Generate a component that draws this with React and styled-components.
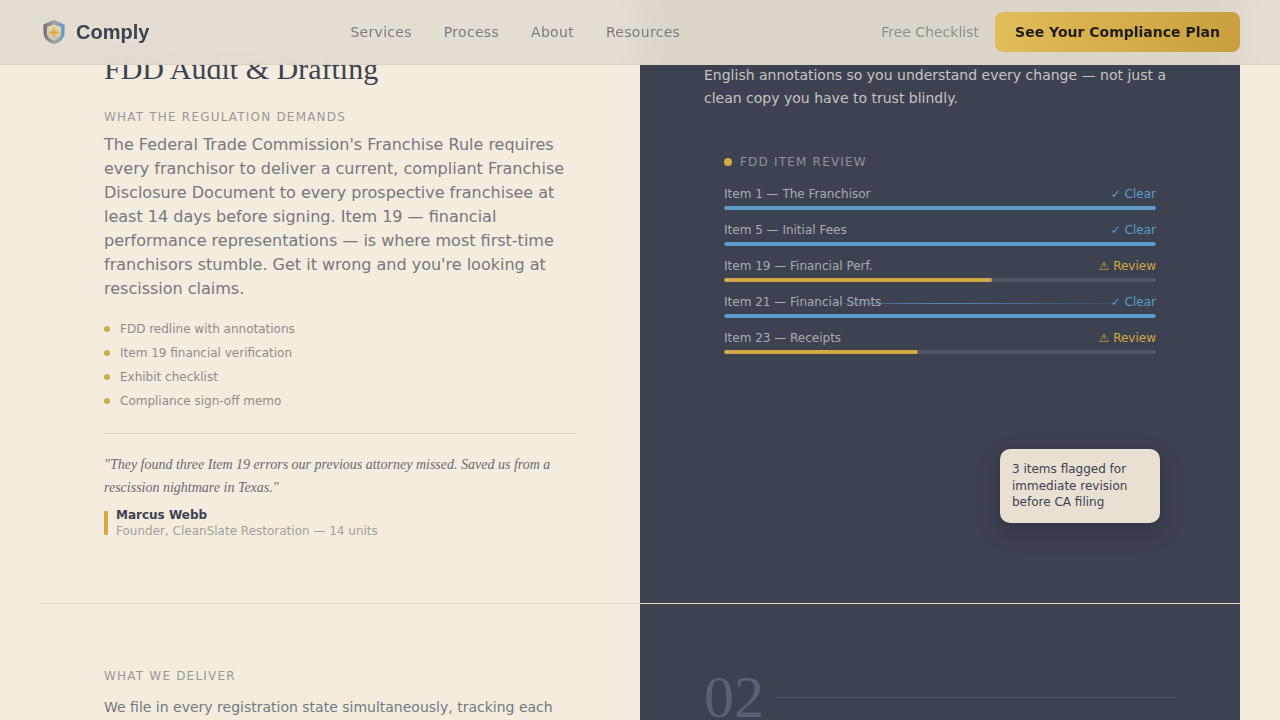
import React from "react";
import styled, { createGlobalStyle } from "styled-components";

const SANS = `"DejaVu Sans", sans-serif`;
const SERIF = `"Liberation Serif", serif`;

const GlobalStyle = createGlobalStyle`
  html, body {
    margin: 0;
    height: 720px;
    overflow: hidden;
    background: #f3ecdf;
  }
  * { box-sizing: border-box; }
`;

const Nav = styled.header`
  position: fixed;
  top: 0;
  left: 0;
  right: 0;
  z-index: 10;
  height: 65px;
  padding: 0 40px;
  display: flex;
  align-items: center;
  justify-content: space-between;
  background: rgba(227, 220, 208, 0.96);
  backdrop-filter: blur(12px);
  border-bottom: 1px solid #dad2c5;
`;

const Brand = styled.div`
  display: flex;
  align-items: center;
  gap: 8px;
  font: 700 20px "Liberation Sans", sans-serif;
  color: #3d4251;
`;

const NavLinks = styled.nav`
  display: flex;
  gap: 32px;
`;

const NavLink = styled.a`
  font: 14px ${SANS};
  letter-spacing: 0.3px;
  color: #7b7b7e;
`;

const NavActions = styled.div`
  display: flex;
  align-items: center;
  gap: 16px;
`;

const CheckLink = styled.a`
  font: 14px ${SANS};
  color: #8f8e8c;
`;

const PlanButton = styled.button`
  width: 245px;
  height: 40px;
  padding: 0;
  border: none;
  border-radius: 8px;
  background: linear-gradient(100deg, #e3bd59, #c89f3d);
  font: 700 14px ${SANS};
  color: #1f1c18;
`;

const Page = styled.main`
  width: 1200px;
  margin: 0 auto;
`;

const Row = styled.section`
  display: grid;
  grid-template-columns: 600px 600px;
  height: ${(p) => p.$height}px;
  border-bottom: ${(p) => (p.$divided ? "1px solid #e2dacc" : "none")};
`;

const TextSide = styled.div`
  padding: ${(p) => p.$top}px 64px 0;
`;

const DarkSide = styled.div`
  padding: ${(p) => p.$top}px 64px 0;
  background: #3d4251;
`;

const Title = styled.h2`
  margin: 0 0 20px;
  font: 400 30px/38px ${SERIF};
  color: #3d4251;
`;

const Eyebrow = styled.div`
  margin-bottom: 7px;
  font: 12px/18px ${SANS};
  letter-spacing: 1.2px;
  text-transform: uppercase;
  color: #9a9894;
`;

const Body = styled.p`
  margin: 0 0 16px;
  font: 16px/24px ${SANS};
  color: #77787c;
`;

const LeadIn = styled.p`
  margin: 11px 0 0;
  font: 14px/23px ${SANS};
  color: #77787c;
`;

const Bullets = styled.ul`
  margin: 0 0 20px;
  padding: 0;
  list-style: none;
`;

const Bullet = styled.li`
  display: flex;
  align-items: center;
  gap: 10px;
  height: 24px;
  font: 12px ${SANS};
  color: #8f8d89;

  &::before {
    content: "";
    width: 6px;
    height: 6px;
    border-radius: 50%;
    background: #d4a843;
  }
`;

const Testimonial = styled.figure`
  margin: 0;
  padding-top: 19px;
  border-top: 1px solid #e2dacc;
`;

const Quote = styled.blockquote`
  margin: 0 0 8px;
  font: italic 14px/23px ${SERIF};
  color: #6a6b70;
`;

const Attribution = styled.figcaption`
  display: flex;
  align-items: center;
  gap: 8px;

  &::before {
    content: "";
    width: 4px;
    height: 24px;
    border-radius: 1px;
    background: #d4a843;
  }
`;

const AuthorName = styled.div`
  font: 700 12px/16px ${SANS};
  color: #3d4251;
`;

const AuthorRole = styled.div`
  font: 12px/16px ${SANS};
  color: #a3a19c;
`;

const DarkBody = styled.p`
  margin: 0 0 43px;
  font: 14px/23px ${SANS};
  color: #c6c4c0;
`;

const Widget = styled.div`
  position: relative;
  padding: 0 20px;
`;

const WidgetHead = styled.div`
  display: flex;
  align-items: center;
  gap: 8px;
  margin-bottom: 14px;
  font: 12px/18px ${SANS};
  letter-spacing: 1.2px;
  color: #8f929a;

  &::before {
    content: "";
    width: 8px;
    height: 8px;
    border-radius: 50%;
    background: #d4a843;
  }
`;

const ItemRow = styled.div`
  height: 36px;
`;

const ItemText = styled.div`
  display: flex;
  justify-content: space-between;
  margin-bottom: 3px;
  font: 12px/18px ${SANS};
  color: #a9abb0;
`;

const Status = styled.span`
  color: ${(p) => (p.$review ? "#d4a843" : "#5b9bc9")};
`;

const Track = styled.div`
  height: 4px;
  border-radius: 2px;
  background: #4f5564;
  overflow: hidden;
`;

const Fill = styled.div`
  height: 100%;
  border-radius: 2px;
  background: ${(p) => (p.$review ? "#d4a843" : "#5b9bc9")};
`;

const ScanLine = styled.div`
  position: absolute;
  left: 20px;
  right: 20px;
  top: 150px;
  height: 1px;
  background: linear-gradient(90deg, transparent 20%, #5b9bc9 50%, transparent 95%);
  opacity: 0.8;
`;

const FloatNote = styled.div`
  position: absolute;
  top: 296px;
  right: 16px;
  width: 160px;
  height: 74px;
  padding: 12px;
  border-radius: 10px;
  background: #e8e0d3;
  box-shadow: 0 8px 24px rgba(0, 0, 0, 0.2);
  font: 12px/16.5px ${SANS};
  color: #3d4251;
`;

const StepHead = styled.div`
  display: flex;
  align-items: center;
  gap: 13px;
`;

const StepNumber = styled.div`
  font: 60px/64px ${SERIF};
  color: #596274;
`;

const StepRule = styled.div`
  flex: 1;
  height: 1px;
  background: #555c6d;
`;

const items = [
  { name: "Item 1 — The Franchisor", pct: 100 },
  { name: "Item 5 — Initial Fees", pct: 100 },
  { name: "Item 19 — Financial Perf.", pct: 62, review: true },
  { name: "Item 21 — Financial Stmts", pct: 100 },
  { name: "Item 23 — Receipts", pct: 45, review: true },
];

const ShieldLogo = () => (
  <svg width="28" height="28" viewBox="0 0 28 28" aria-hidden="true">
    <defs>
      <linearGradient id="rim" x1="0" y1="0" x2="1" y2="0">
        <stop offset="0" stopColor="#6b6f76" />
        <stop offset="0.5" stopColor="#a3a5a6" />
        <stop offset="1" stopColor="#5b9bc9" />
      </linearGradient>
      <linearGradient id="core" x1="0" y1="0" x2="0" y2="1">
        <stop offset="0" stopColor="#e8d9ad" />
        <stop offset="1" stopColor="#c9c3b8" />
      </linearGradient>
    </defs>
    <path d="M14 2 24.500 6.500v8.500c0 5.500-4.500 9.500-10.500 11C8 24.500 3.500 20.500 3.500 15V6.500z" fill="url(#rim)" />
    <path d="M14 6.500 21 9v6.200c0 3.800-3 6.300-7 7.500-4-1.200-7-3.700-7-7.500V9z" fill="url(#core)" />
    <path d="M14 8.500l1.500 4.500 4.500 1.500-4.500 1.500L14 20.500l-1.500-4.500L8 14.500l4.500-1.500z" fill="#e0ad40" />
  </svg>
);

export default function App() {
  return (
    <>
      <GlobalStyle />
      <Nav>
        <Brand>
          <ShieldLogo />
          Comply
        </Brand>
        <NavLinks>
          <NavLink>Services</NavLink>
          <NavLink>Process</NavLink>
          <NavLink>About</NavLink>
          <NavLink>Resources</NavLink>
        </NavLinks>
        <NavActions>
          <CheckLink>Free Checklist</CheckLink>
          <PlanButton>See Your Compliance Plan</PlanButton>
        </NavActions>
      </Nav>
      <Page>
        <Row $height={604} $divided>
          <TextSide $top={50}>
            <Title>FDD Audit &amp; Drafting</Title>
            <Eyebrow>What the regulation demands</Eyebrow>
            <Body>
              The Federal Trade Commission's Franchise Rule requires every
              franchisor to deliver a current, compliant Franchise Disclosure
              Document to every prospective franchisee at least 14 days before
              signing. Item 19 — financial performance representations — is
              where most first-time franchisors stumble. Get it wrong and
              you're looking at rescission claims.
            </Body>
            <Bullets>
              <Bullet>FDD redline with annotations</Bullet>
              <Bullet>Item 19 financial verification</Bullet>
              <Bullet>Exhibit checklist</Bullet>
              <Bullet>Compliance sign-off memo</Bullet>
            </Bullets>
            <Testimonial>
              <Quote>
                "They found three Item 19 errors our previous attorney missed.
                Saved us from a rescission nightmare in Texas."
              </Quote>
              <Attribution>
                <div>
                  <AuthorName>Marcus Webb</AuthorName>
                  <AuthorRole>Founder, CleanSlate Restoration — 14 units</AuthorRole>
                </div>
              </Attribution>
            </Testimonial>
          </TextSide>
          <DarkSide $top={64}>
            <DarkBody>
              English annotations so you understand every change — not just a
              clean copy you have to trust blindly.
            </DarkBody>
            <Widget>
              <WidgetHead>FDD ITEM REVIEW</WidgetHead>
              {items.map((item) => (
                <ItemRow key={item.name}>
                  <ItemText>
                    {item.name}
                    <Status $review={item.review}>
                      {item.review ? "⚠ Review" : "✓ Clear"}
                    </Status>
                  </ItemText>
                  <Track>
                    <Fill $review={item.review} style={{ width: `${item.pct}%` }} />
                  </Track>
                </ItemRow>
              ))}
              <ScanLine />
              <FloatNote>3 items flagged for immediate revision before CA filing</FloatNote>
            </Widget>
          </DarkSide>
        </Row>
        <Row $height={120}>
          <TextSide $top={63}>
            <Eyebrow>What we deliver</Eyebrow>
            <LeadIn>We file in every registration state simultaneously, tracking each</LeadIn>
          </TextSide>
          <DarkSide $top={61}>
            <StepHead>
              <StepNumber>02</StepNumber>
              <StepRule />
            </StepHead>
          </DarkSide>
        </Row>
      </Page>
    </>
  );
}
